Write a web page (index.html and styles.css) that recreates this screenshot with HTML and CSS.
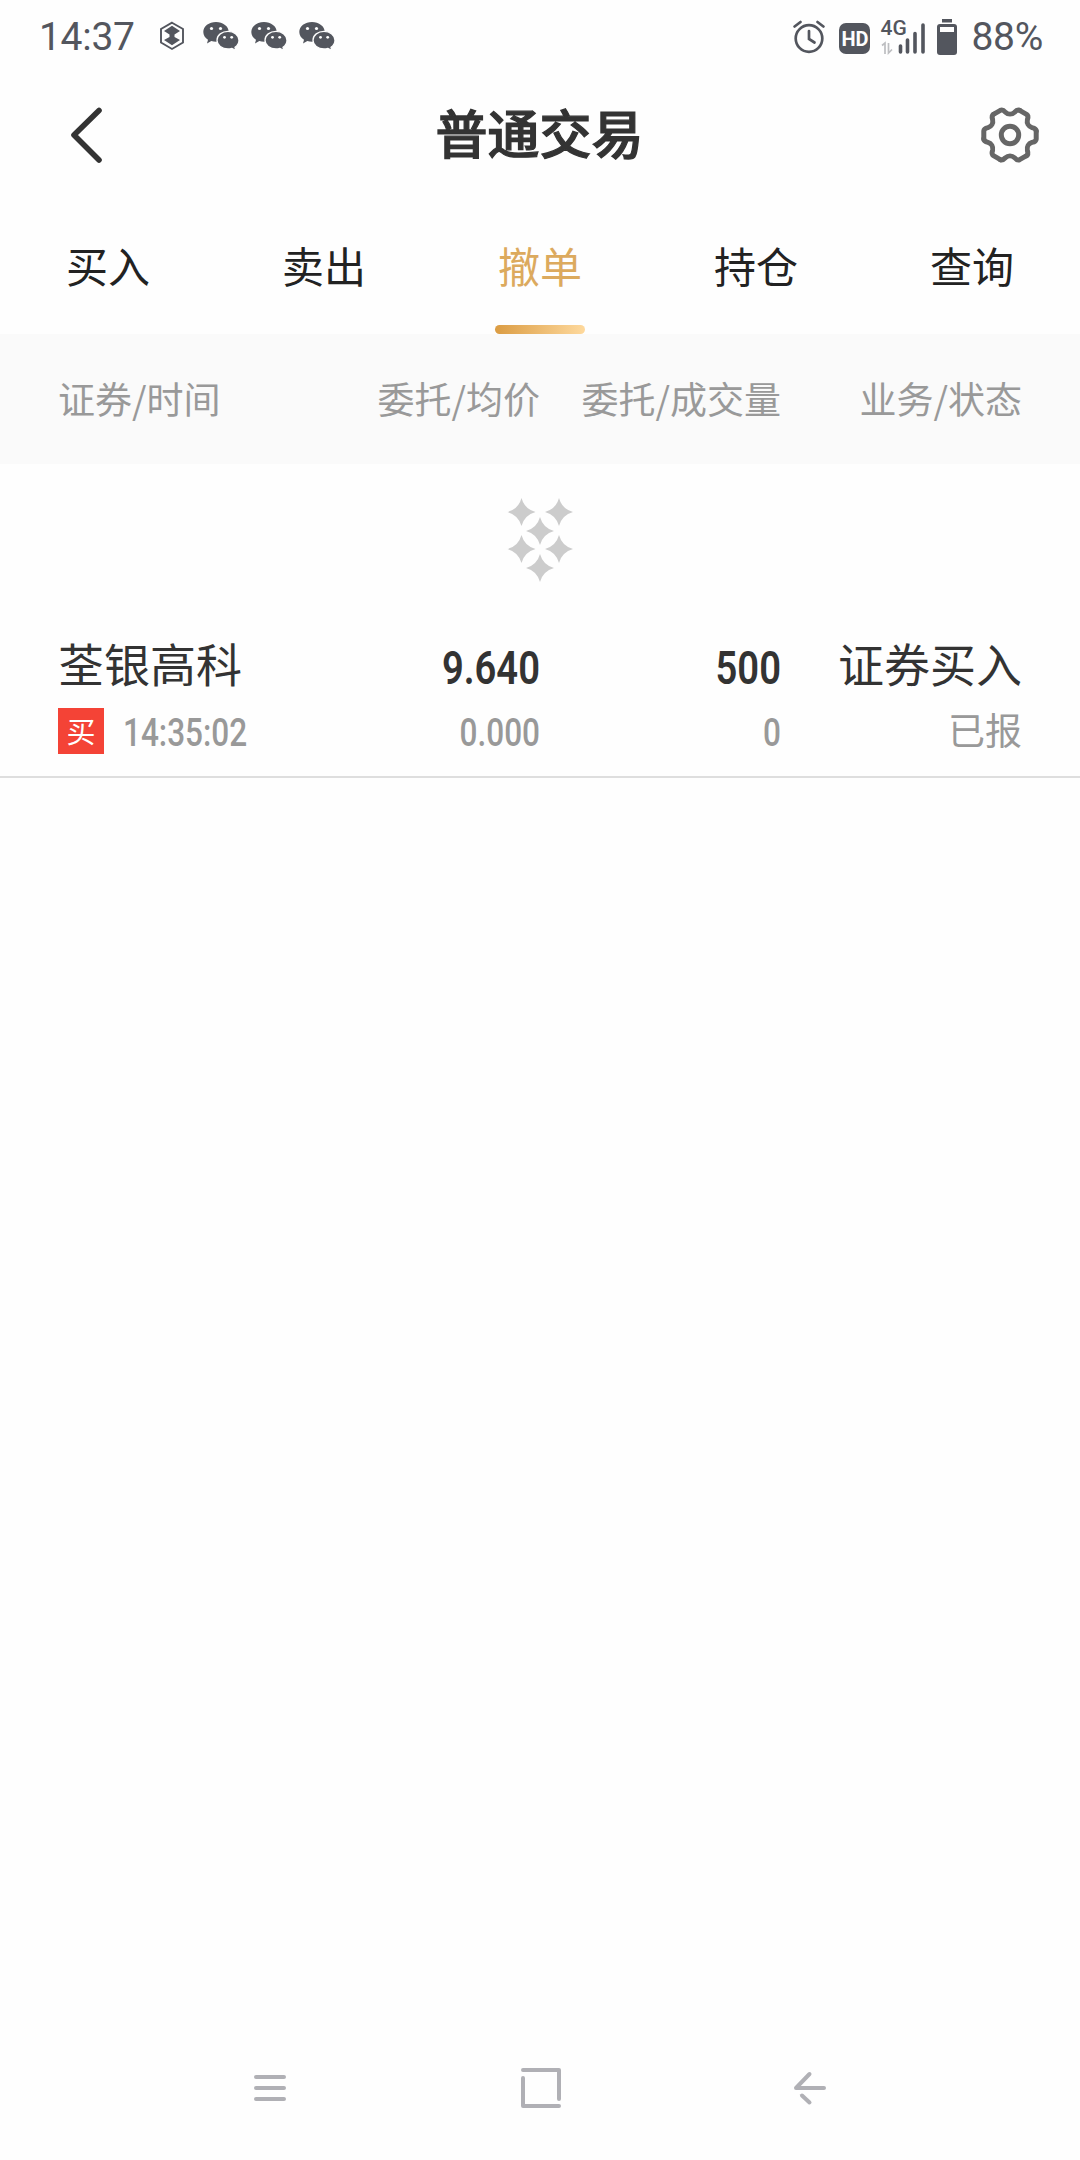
FILE: index.html
```html
<!DOCTYPE html>
<html lang="zh-CN">
<head>
    <meta charset="UTF-8">
    <title>普通交易</title>
    <link rel="stylesheet" href="styles.css">
</head>
<body>
    <!-- shared icon shapes -->
    <svg class="defs" width="0" height="0">
        <defs>
            <g id="wechat">
                <path d="M13 1C6 1 .3 5.300 .3 11c0 3.300 1.900 6 4.700 7.800L4 22.500l4.300-2.400c1.500.5 3 .7 4.700.7 7 0 12.700-4.200 12.700-9.800S20 1 13 1z"/>
                <path class="front" d="M25 10.300c6 0 11 3.900 11 8.900 0 2.900-1.600 5.400-4 7l.9 3.300-3.900-2.100c-1.200.4-2.600.6-4 .6-6 0-11-3.800-11-8.800s5-8.900 11-8.900z"/>
                <circle class="eye" cx="8.500" cy="7.500" r="1.600"/>
                <circle class="eye" cx="17.500" cy="7.500" r="1.600"/>
                <circle class="eye" cx="21.500" cy="16.300" r="1.400"/>
                <circle class="eye" cx="28.700" cy="16.300" r="1.400"/>
            </g>
            <path id="star" d="M0-14Q3-3 14 0Q3 3 0 14Q-3 3-14 0Q-3-3 0-14z"/>
            <path id="tooth" d="M26.200-4V4Q26 6.700 22 7.400C18.500 8.500 16.600 11.800 17.400 15.400Q18.600 19.300 16.600 20.700"/>
        </defs>
    </svg>

    <div class="status-bar">
        <span class="clock">14:37</span>
        <svg class="hex" width="26" height="30" viewBox="0 0 26 30">
            <path d="M13 1.700L24 8v13.500L13 28 2 21.500V8z" fill="none" stroke="#53565e" stroke-width="1.900"/>
            <path d="M13 4.800L21 10 15.500 13.500v2.500L21 19 13 24.200 5 19l5.500-3v-2.500L5 10z" fill="#53565e"/>
        </svg>
        <svg class="wechat" width="37" height="30"><use href="#wechat"/></svg>
        <svg class="wechat" width="37" height="30"><use href="#wechat"/></svg>
        <svg class="wechat" width="37" height="30"><use href="#wechat"/></svg>

        <div class="status-right">
            <svg width="32" height="34" viewBox="0 0 32 34" fill="none" stroke="#53565e" stroke-linecap="round">
                <circle cx="16" cy="18.500" r="13.300" stroke-width="2.700"/>
                <path d="M16 11v8l5.500 3.500" stroke-width="2.700"/>
                <path d="M1.600 6.500L7.500 2M30.400 6.500L24.500 2" stroke-width="2.700"/>
            </svg>
            <span class="hd">HD</span>
            <div class="signal">
                <span class="net">4G</span>
                <svg width="46" height="36" viewBox="0 0 46 36">
                    <path d="M20.500 27v6M27.500 21v12M35 14.500v18.500M43 6v27" stroke="#53565e" stroke-width="3.600" stroke-linecap="round"/>
                    <path d="M2 26.500l3-2.500v11M8.500 24v10l3.500-3.500" fill="none" stroke="#bdbec1" stroke-width="1.700"/>
                </svg>
            </div>
            <svg class="battery" width="20" height="37" viewBox="0 0 20 37">
                <rect x="5" y="0" width="10" height="3.500" fill="#53565e"/>
                <rect x="0" y="5" width="20" height="31" rx="3" fill="#53565e"/>
                <rect x="3" y="8" width="14" height="5" fill="#fefefe"/>
            </svg>
            <span class="percent">88%</span>
        </div>
    </div>

    <div class="title-bar">
        <svg class="back" width="34" height="58" viewBox="0 0 34 58">
            <path d="M29 4.500L4 29l25 25" fill="none" stroke="#333" stroke-width="5.600" stroke-linecap="round" stroke-linejoin="round"/>
        </svg>
        <h1>普通交易</h1>
        <svg class="gear" width="60" height="60" viewBox="-30 -30 60 60" fill="none" stroke="#666" stroke-width="5" stroke-linecap="round" stroke-linejoin="round">
            <use href="#tooth"/>
            <use href="#tooth" transform="rotate(60)"/>
            <use href="#tooth" transform="rotate(120)"/>
            <use href="#tooth" transform="rotate(180)"/>
            <use href="#tooth" transform="rotate(240)"/>
            <use href="#tooth" transform="rotate(300)"/>
            <circle r="8.700"/>
        </svg>
    </div>

    <div class="tabs">
        <div class="tab">买入</div>
        <div class="tab">卖出</div>
        <div class="tab active">撤单</div>
        <div class="tab">持仓</div>
        <div class="tab">查询</div>
    </div>

    <div class="columns list-head">
        <span>证券/时间</span>
        <span>委托/均价</span>
        <span>委托/成交量</span>
        <span>业务/状态</span>
    </div>

    <div class="loading">
        <svg width="68" height="86" viewBox="0 0 68 86" fill="#ccc">
            <use href="#star" x="15.500" y="15"/>
            <use href="#star" x="53" y="15"/>
            <use href="#star" x="34" y="34"/>
            <use href="#star" x="15.500" y="52"/>
            <use href="#star" x="53" y="52"/>
            <use href="#star" x="34" y="71"/>
        </svg>
    </div>

    <div class="order">
        <div class="columns main-line">
            <span>荃银高科</span>
            <span class="num">9.640</span>
            <span class="num">500</span>
            <span>证券买入</span>
        </div>
        <div class="columns sub-line">
            <div class="time">
                <span class="badge">买</span>
                <span class="num">14:35:02</span>
            </div>
            <span class="num">0.000</span>
            <span class="num">0</span>
            <span>已报</span>
        </div>
    </div>

    <div class="nav-bar">
        <svg width="48" height="48" viewBox="0 0 48 48">
            <path d="M10 13h28M10 24h28M10 35h28"/>
        </svg>
        <svg width="48" height="48" viewBox="0 0 48 48">
            <path d="M7 6h36v29M43 42H7V14"/>
        </svg>
        <svg width="48" height="48" viewBox="0 0 48 48">
            <path d="M38 24H10L23.500 10"/>
            <path d="M16 31.500L23.500 38.500"/>
        </svg>
    </div>
</body>
</html>
```

FILE: styles.css
```css
* {
    margin: 0;
    padding: 0;
    box-sizing: border-box;
}

body {
    min-height: 2160px;
    display: flex;
    flex-direction: column;
    background: #fefefe;
    color: #333;
    font-family: "Noto Sans CJK SC", sans-serif;
}

svg {
    display: block;
    flex: none;
}

.defs {
    position: absolute;
}

/* status bar */
.status-bar {
    height: 74px;
    display: flex;
    align-items: center;
    padding: 0 37px 0 39px;
    color: #53565e;
    font-family: Roboto, sans-serif;
}

.clock {
    width: 98px;
    font-size: 39px;
    line-height: 76px;
    letter-spacing: -0.3px;
}

.hex {
    margin: 0 7px 2px 22px;
}

.wechat {
    margin: 0 0 2px 11px;
    fill: #53565e;
}

.front {
    stroke: #fefefe;
    stroke-width: 1.3px;
}

.eye {
    fill: #fefefe;
}

.status-right {
    display: flex;
    align-items: center;
    margin-left: auto;
}

.hd {
    width: 31px;
    height: 31px;
    margin: 3px 10px 0 14px;
    border-radius: 7px;
    background: #53565e;
    color: #fefefe;
    font-size: 20px;
    font-weight: 700;
    line-height: 32px;
    text-align: center;
}

.signal {
    position: relative;
    margin-right: 11px;
}

.net {
    position: absolute;
    left: 0;
    top: -1px;
    font-size: 21px;
    font-weight: 500;
    line-height: 20px;
}

.percent {
    margin-left: 14px;
    font-size: 39px;
    letter-spacing: -0.3px;
}

/* title */
.title-bar {
    height: 122px;
    display: flex;
    align-items: center;
    justify-content: space-between;
    padding: 0 40px 0 70px;
}

.title-bar h1 {
    width: 208px;
    margin: 0 5px 6px 0;
    font-size: 52px;
    font-weight: 500;
    line-height: 74px;
    -webkit-text-stroke: 1.2px #333;
}

/* tabs */
.tabs {
    height: 138px;
    display: flex;
}

.tab {
    position: relative;
    flex: 1;
    color: #222;
    font-size: 42px;
    line-height: 138px;
    text-align: center;
}

.tab.active {
    color: #dcaa5e;
}

.tab.active::after {
    content: '';
    position: absolute;
    left: 63px;
    bottom: 0;
    width: 90px;
    height: 9px;
    border-radius: 5px;
    background: linear-gradient(90deg, #db9c43, #fed99d);
}

/* order list */
.columns {
    display: grid;
    grid-template-columns: 241px 241px 241px 241px;
    padding: 0 58px;
    text-align: right;
    white-space: nowrap;
}

.columns > :first-child {
    text-align: left;
}

.list-head {
    height: 130px;
    background: #fafafa;
    color: #999;
    font-size: 37px;
    line-height: 129px;
}

.loading {
    height: 150px;
    display: flex;
    justify-content: center;
    padding-top: 33px;
}

.order {
    height: 164px;
    padding-top: 20px;
    border-bottom: 2px solid #dedede;
}

.main-line {
    height: 65px;
    font-size: 46px;
    line-height: 57px;
}

.sub-line {
    height: 60px;
    color: #999;
    font-size: 37px;
    line-height: 60px;
}

.num {
    font-family: Roboto, sans-serif;
    transform: scaleX(0.83);
    transform-origin: right;
}

.main-line .num {
    padding-top: 6px;
    font-weight: 600;
}

.sub-line .num {
    padding-top: 4px;
    font-size: 38px;
    font-weight: 500;
}

.time {
    display: flex;
    align-items: center;
}

.time .num {
    margin-left: 19px;
    transform-origin: left;
}

.badge {
    width: 46px;
    height: 46px;
    background: #f44336;
    color: #fff;
    font-size: 29px;
    line-height: 44px;
    text-align: center;
}

/* system navigation */
.nav-bar {
    height: 144px;
    display: flex;
    align-items: center;
    justify-content: space-between;
    margin-top: auto;
    padding: 0 246px;
    fill: none;
    stroke: #b0b0b5;
    stroke-width: 4px;
    stroke-linecap: round;
    stroke-linejoin: round;
}
```
